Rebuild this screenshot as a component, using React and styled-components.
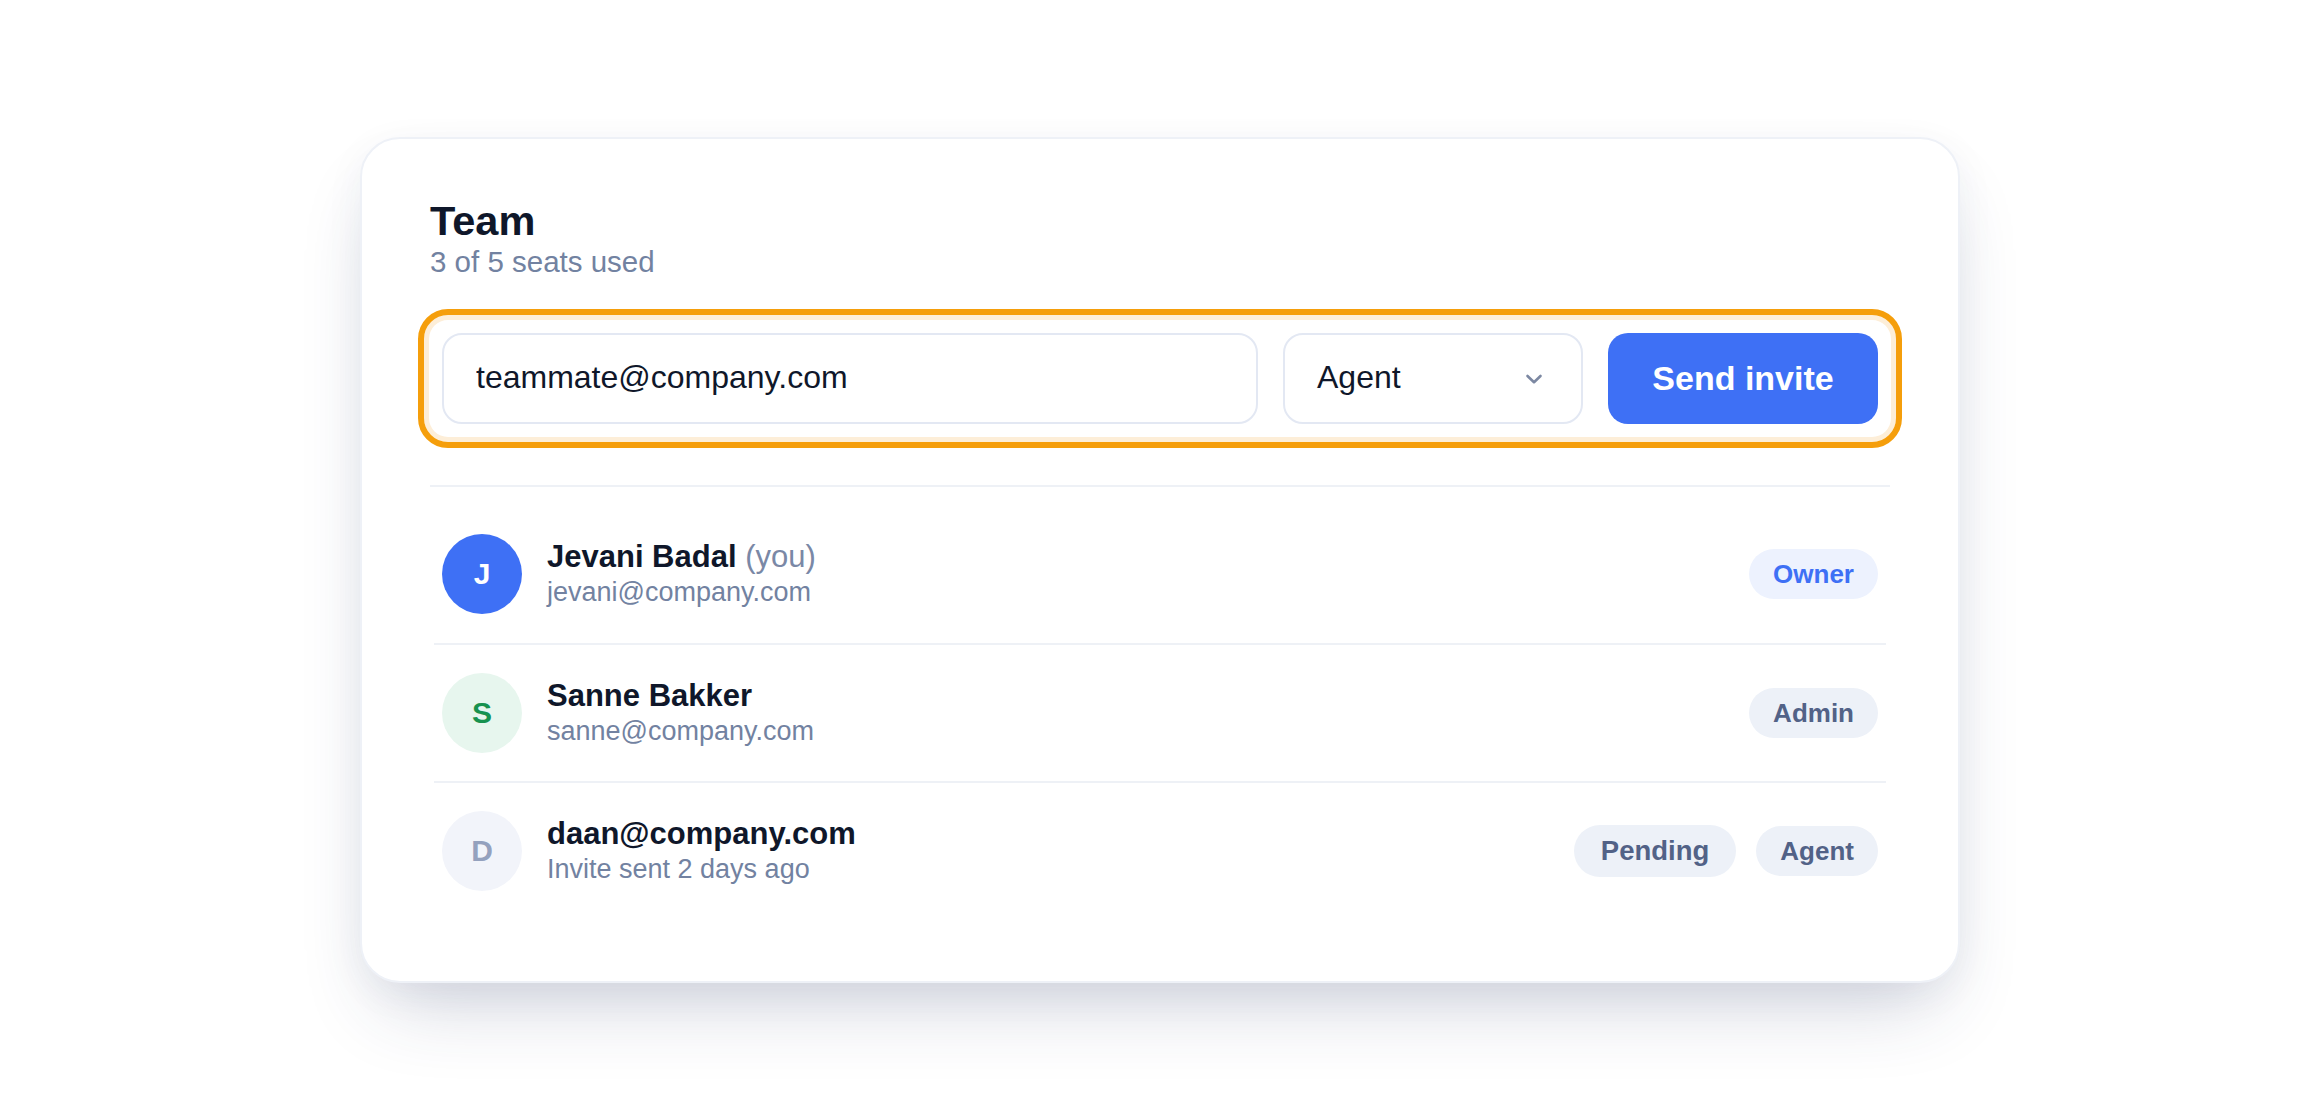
import React from "react";
import styled, { createGlobalStyle } from "styled-components";

const GlobalStyle = createGlobalStyle`
  * { box-sizing: border-box; }
  html, body {
    margin: 0;
    padding: 0;
    background: #ffffff;
    font-family: "Liberation Sans", Arial, sans-serif;
  }
`;

const members = [
  {
    initial: "J",
    tone: "blue",
    name: "Jevani Badal",
    you: true,
    sub: "jevani@company.com",
    role: "Owner",
    roleTone: "blue",
  },
  {
    initial: "S",
    tone: "green",
    name: "Sanne Bakker",
    sub: "sanne@company.com",
    role: "Admin",
  },
  {
    initial: "D",
    tone: "grey",
    name: "daan@company.com",
    sub: "Invite sent 2 days ago",
    pending: true,
    role: "Agent",
  },
];

const App = () => {
  return (
    <React.Fragment>
      <GlobalStyle />
      <Page>
        <Card>
          <Title>Team</Title>
          <Subtitle>3 of 5 seats used</Subtitle>

          <InviteBar>
            <EmailInput defaultValue="teammate@company.com" readOnly />
            <RoleSelect>
              <span>Agent</span>
              <svg width="18" height="12" viewBox="0 0 18 12" fill="none">
                <path
                  d="M2.5 3L9 9.2L15.5 3"
                  stroke="#7c88a2"
                  strokeWidth="2.6"
                  strokeLinecap="round"
                  strokeLinejoin="round"
                />
              </svg>
            </RoleSelect>
            <SendButton>Send invite</SendButton>
          </InviteBar>

          <Divider />

          <List>
            {members.map((m) => (
              <Row key={m.name}>
                <Avatar tone={m.tone}>{m.initial}</Avatar>
                <Info>
                  <Name>
                    {m.name}
                    {m.you && <You> (you)</You>}
                  </Name>
                  <Sub>{m.sub}</Sub>
                </Info>
                <Badges>
                  {m.pending && <StatusBadge>Pending</StatusBadge>}
                  <RoleBadge tone={m.roleTone}>{m.role}</RoleBadge>
                </Badges>
              </Row>
            ))}
          </List>
        </Card>
      </Page>
    </React.Fragment>
  );
};

const Page = styled.div`
  min-height: 100vh;
  display: flex;
  align-items: center;
  justify-content: center;
`;

const Card = styled.div`
  width: 1600px;
  background: #ffffff;
  border: 2px solid #eef1f7;
  border-radius: 40px;
  padding: 59px 68px 62px;
  box-shadow: 0 40px 80px -24px rgba(40, 55, 100, 0.24),
    0 10px 40px rgba(40, 55, 100, 0.05);
`;

const Title = styled.h1`
  margin: 0;
  font-size: 41.5px;
  line-height: 46px;
  font-weight: 700;
  color: #0f172a;
`;

const Subtitle = styled.div`
  font-size: 29.5px;
  line-height: 35px;
  color: #7282a1;
`;

const InviteBar = styled.div`
  margin: 30px -12px 0;
  display: flex;
  align-items: stretch;
  gap: 25px;
  padding: 18px;
  border: 6px solid #f59e0b;
  border-radius: 30px;
  box-shadow: inset 0 0 0 5px #fdeed8;
`;

const EmailInput = styled.input`
  flex: 1;
  min-width: 0;
  height: 91px;
  border: 2px solid #e3e8f3;
  border-radius: 20px;
  padding: 0 32px 3px;
  font-family: "Liberation Sans", Arial, sans-serif;
  font-size: 32px;
  color: #0f172a;
  background: #ffffff;
  outline: none;
`;

const RoleSelect = styled.div`
  width: 300px;
  height: 91px;
  display: flex;
  align-items: center;
  justify-content: space-between;
  border: 2px solid #e3e8f3;
  border-radius: 20px;
  padding: 0 38px 3px 32px;
  font-size: 32px;
  color: #0f172a;

  svg {
    display: block;
    margin-top: 3px;
  }
`;

const SendButton = styled.button`
  width: 270px;
  height: 91px;
  border: none;
  border-radius: 20px;
  background: #3e70f5;
  color: #ffffff;
  font-family: "Liberation Sans", Arial, sans-serif;
  font-size: 34px;
  font-weight: 700;
  cursor: pointer;
`;

const Divider = styled.div`
  margin-top: 37px;
  height: 2px;
  background: #eef1f6;
`;

const List = styled.div`
  margin: 18px 4px 0;
`;

const Row = styled.div`
  height: 138px;
  display: flex;
  align-items: center;
  padding: 0 8px;

  & + & {
    border-top: 2px solid #eef1f6;
  }
`;

const avatarTones = {
  blue: { bg: "#3e70f5", fg: "#ffffff" },
  green: { bg: "#e7f6ee", fg: "#17924f" },
  grey: { bg: "#f2f4fa", fg: "#94a1be" },
};

const Avatar = styled.div`
  width: 80px;
  height: 80px;
  flex: none;
  border-radius: 50%;
  display: flex;
  align-items: center;
  justify-content: center;
  background: ${(p) => avatarTones[p.tone].bg};
  color: ${(p) => avatarTones[p.tone].fg};
  font-size: 30px;
  font-weight: 700;
`;

const Info = styled.div`
  flex: 1;
  margin-left: 25px;
`;

const Name = styled.div`
  font-size: 31px;
  line-height: 36px;
  font-weight: 700;
  color: #0f172a;
`;

const You = styled.span`
  font-weight: 400;
  color: #7a88a6;
`;

const Sub = styled.div`
  font-size: 27px;
  line-height: 34px;
  color: #7282a1;
`;

const Badges = styled.div`
  display: flex;
  align-items: center;
  gap: 20px;
`;

const RoleBadge = styled.span`
  height: 50px;
  display: inline-flex;
  align-items: center;
  padding: 0 24px;
  border-radius: 25px;
  font-size: 26px;
  font-weight: 700;
  background: ${(p) => (p.tone === "blue" ? "#edf2fe" : "#edf1f8")};
  color: ${(p) => (p.tone === "blue" ? "#3e70f5" : "#526287")};
`;

const StatusBadge = styled.span`
  height: 52px;
  display: inline-flex;
  align-items: center;
  padding: 0 27px;
  border-radius: 26px;
  font-size: 27.5px;
  font-weight: 700;
  background: #edf1f8;
  color: #526287;
`;

export default App;
